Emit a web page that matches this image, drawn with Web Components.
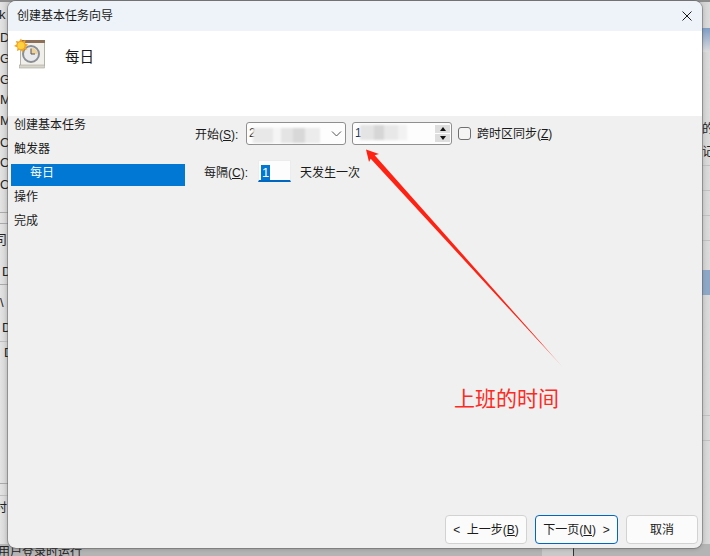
<!DOCTYPE html>
<html lang="zh">
<head>
<meta charset="utf-8">
<title>创建基本任务向导</title>
<style>
  html, body { margin: 0; padding: 0; }
  body {
    width: 710px;
    height: 556px;
    overflow: hidden;
    font: 12px/16px "Liberation Sans", "Noto Sans CJK SC", sans-serif;
    color: #1a1a1a;
  }
</style>
</head>
<body>
<task-desktop>
  <wizard-window heading="创建基本任务向导">
    <wizard-header slot="header">每日</wizard-header>

    <wizard-step slot="steps">创建基本任务</wizard-step>
    <wizard-step slot="steps">触发器</wizard-step>
    <wizard-step slot="steps" selected>每日</wizard-step>
    <wizard-step slot="steps">操作</wizard-step>
    <wizard-step slot="steps">完成</wizard-step>

    <daily-form slot="form"></daily-form>

    <wizard-button slot="footer" style="width:82px">&lt;&nbsp; 上一步(<u>B</u>)</wizard-button>
    <wizard-button slot="footer" style="width:83px" primary>下一页(<u>N</u>) &nbsp;&gt;</wizard-button>
    <wizard-button slot="footer" style="width:72px">取消</wizard-button>
  </wizard-window>
  <red-annotation>上班的时间</red-annotation>
</task-desktop>

<script>
function defineElement(name, html) {
  const template = document.createElement('template');
  template.innerHTML = html;
  customElements.define(name, class extends HTMLElement {
    constructor() {
      super();
      this.attachShadow({ mode: 'open' });
      this.shadowRoot.appendChild(template.content.cloneNode(true));
    }
  });
}

/* desktop behind the dialog: only thin strips of it stay visible */
defineElement('task-desktop', `
  <style>
    :host { display: block; position: relative; width: 710px; height: 556px; overflow: hidden; background: #d6d6d6; }
    .left { position: absolute; left: 0; top: 0; width: 12px; height: 556px; background: linear-gradient(90deg, #e4e4e4, #c4c4c4); }
    .right { position: absolute; right: 0; top: 0; width: 12px; height: 556px; background: linear-gradient(90deg, #c8c8c8, #dcdcdc); }
    .bottom { position: absolute; left: 0; bottom: 0; width: 710px; height: 12px; background: #b4b4b4; }
    .top { position: absolute; left: 0; top: 0; width: 710px; height: 2px; background: #8c8c8c; }
    .t { position: absolute; font-size: 13px; line-height: 16px; white-space: nowrap; color: #222; }
    .l { position: absolute; height: 1px; background: #a8a8a8; }
    .blue { position: absolute; right: 0; width: 8px; background: #8fa7c6; }
    .pale { position: absolute; bottom: 0; height: 8px; background: #c9c9c9; }
  </style>
  <div class="left"></div>
  <div class="right"></div>
  <div class="bottom"></div>
  <div class="top"></div>

  <div class="blue" style="top:28px;height:24px;background:linear-gradient(#7f9dc4,#dcdcdc)"></div>
  <div class="blue" style="top:270px;height:25px"></div>
  <div class="pale" style="left:542px;width:31px"></div>
  <div class="l" style="left:573px;bottom:0;width:1px;height:8px;background:#333"></div>

  <span class="t" style="left:-1px;top:7px">k</span>
  <span class="t" style="left:0;top:30px">De</span>
  <span class="t" style="left:0;top:51px">Go</span>
  <span class="t" style="left:0;top:72px">Go</span>
  <span class="t" style="left:0;top:92px">Mi</span>
  <span class="t" style="left:0;top:113px">Mi</span>
  <span class="t" style="left:0;top:135px">Or</span>
  <span class="t" style="left:0;top:155px">Or</span>
  <span class="t" style="left:0;top:177px">Or</span>
  <span class="t" style="left:-6px;top:232px">司</span>
  <span class="t" style="left:2px;top:264px">D</span>
  <span class="t" style="left:0;top:295px">\\</span>
  <span class="t" style="left:2px;top:320px">D</span>
  <span class="t" style="left:4px;top:345px">D</span>
  <span class="t" style="left:-5px;top:500px;font-size:12px">时</span>
  <span class="t" style="left:-2px;top:544px;font-size:12px">用户登录时运行</span>
  <span class="t" style="left:702px;top:121px;font-size:12px">的</span>
  <span class="t" style="left:702px;top:144px;font-size:12px">记</span>

  <div class="l" style="left:0;top:212px;width:8px"></div>
  <div class="l" style="left:0;top:223px;width:8px"></div>
  <div class="l" style="left:0;top:284px;width:8px"></div>
  <div class="l" style="left:0;top:341px;width:8px;background:#bdbdbd"></div>
  <div class="l" style="left:0;top:483px;width:8px"></div>
  <div class="l" style="left:0;top:495px;width:8px;background:#bdbdbd"></div>
  <div class="l" style="right:0;top:165px;width:8px;background:#c0c0c0"></div>
  <div class="l" style="right:0;top:190px;width:8px;background:#c0c0c0"></div>
  <div class="l" style="right:0;top:215px;width:8px;background:#c0c0c0"></div>
  <div class="l" style="right:0;top:240px;width:8px;background:#c0c0c0"></div>
  <div class="l" style="right:0;top:415px;width:8px;background:#c0c0c0"></div>
  <div class="l" style="right:0;top:440px;width:8px;background:#c0c0c0"></div>
  <slot></slot>
`);

defineElement('wizard-window', `
  <style>
    :host {
      display: flex;
      flex-direction: column;
      position: absolute;
      left: 8px;
      top: 1px;
      width: 694px;
      height: 547px;
      border-radius: 8px;
      overflow: hidden;
      background: #f0f0f0;
      box-shadow: 0 0 0 1px rgba(90,90,90,.45), 0 1px 4px rgba(0,0,0,.2);
    }
    .title { display: flex; align-items: center; justify-content: space-between; height: 30px; padding: 0 10px 0 9px; background: #eef3f9; }
    .head { height: 85px; background: #fff; }
    .body { flex: 1; display: flex; }
    .steps { width: 174px; margin-left: 3px; }
    .form { flex: 1; padding: 6px 0 0 10px; }
    .footer { display: flex; justify-content: flex-end; gap: 8px; padding: 0 4px 4px 0; }
    svg { display: block; }
  </style>
  <div class="title">
    <span id="heading"></span>
    <svg width="10" height="10" viewBox="0 0 10 10"><path d="M.5.5l9 9M9.500.5l-9 9" stroke="#1a1a1a" fill="none"/></svg>
  </div>
  <div class="head"><slot name="header"></slot></div>
  <div class="body">
    <div class="steps"><slot name="steps"></slot></div>
    <div class="form"><slot name="form"></slot></div>
  </div>
  <div class="footer"><slot name="footer"></slot></div>
`);
customElements.whenDefined('wizard-window').then(() => {
  const win = document.querySelector('wizard-window');
  win.shadowRoot.getElementById('heading').textContent = win.getAttribute('heading');
});

defineElement('wizard-header', `
  <style>
    :host { display: flex; padding: 7px 0 0 6px; }
    .name { margin: 8px 0 0 19px; font-size: 14.500px; line-height: 22px; }
    svg { display: block; }
  </style>
  <svg width="32" height="34" viewBox="0 0 32 34">
    <rect x="6.500" y="4.500" width="24" height="23" fill="#f1efe9" stroke="#b5b2aa"/>
    <rect x="5.500" y="27" width="25" height="3" fill="#d8d5cc" stroke="#a8a59c" stroke-width=".6"/>
    <rect x="6" y="2" width="25" height="3" fill="#8e6f58"/>
    <circle cx="17" cy="16" r="8" fill="#e9eaec" stroke="#8a8f96" stroke-width="2"/>
    <path d="M17 16V9.500A6.500 6.500 0 0 1 23.500 16z" fill="#efd29a"/>
    <path d="M17 10.500V16h4" stroke="#555" fill="none"/>
    <g transform="translate(0 .5)">
      <path d="M7 0l1.500 3L11.500 1.500 11 5l3 1-2.500 2.500L13.500 11l-3.500-.3L8.500 14 6.500 11 3 12.500 3.500 9 0 7.500 3 5.500 1.800 2.500 5 3z" fill="#f5a31c"/>
      <circle cx="7" cy="7" r="3.500" fill="#fdd23e"/>
    </g>
  </svg>
  <span class="name"><slot></slot></span>
`);

defineElement('wizard-step', `
  <style>
    :host { display: block; box-sizing: border-box; height: 22px; margin-bottom: 2px; padding: 1px 0 0 3px; line-height: 16px; }
    :host([selected]) { padding-left: 19px; background: #0078d4; color: #fff; }
  </style>
  <slot></slot>
`);

defineElement('date-combo', `
  <style>
    :host { display: block; position: relative; box-sizing: border-box; width: 100px; height: 23px; padding-left: 2px; line-height: 21px; color: #333; background: #fdfdfd; border: 1px solid #8f8f8f; border-radius: 3px; }
    svg { position: absolute; right: 3px; top: 8px; }
    .smear { position: absolute; left: 6px; top: 5px; width: 67px; height: 15px; filter: blur(1px); background: linear-gradient(90deg, #e8e8e8 0 30%, #f5f5f5 30% 42%, #e4e4e4 42% 60%, #d8d8d8 60% 78%, #ececec 78% 100%); }
  </style>
  <slot></slot>
  <div class="smear"></div>
  <svg width="11" height="6" viewBox="0 0 11 6"><path d="M1 .5l4.500 4.500L10 .5" stroke="#555" fill="none"/></svg>
`);

defineElement('time-spin', `
  <style>
    :host { display: block; position: relative; box-sizing: border-box; width: 100px; height: 23px; padding-left: 2px; line-height: 21px; color: #10305a; background: #fdfdfd; border: 1px solid #8f8f8f; border-radius: 3px; }
    .smear { position: absolute; left: 7px; top: 2px; width: 47px; height: 15px; filter: blur(1px); background: linear-gradient(90deg, #e4e4e4 0 30%, #d6d6d6 30% 50%, #e8e8e8 50% 80%, #f2f2f2 80% 100%); }
    .spin { position: absolute; right: 1px; top: 2px; width: 15px; display: flex; flex-direction: column; gap: 1px; }
    .spin div { display: flex; align-items: center; justify-content: center; height: 8px; background: #dedede; }
    .up { width: 0; height: 0; border: 3px solid transparent; border-top: 0; border-bottom: 4px solid #111; }
    .down { width: 0; height: 0; border: 3px solid transparent; border-bottom: 0; border-top: 4px solid #111; }
  </style>
  <slot></slot>
  <div class="smear"></div>
  <div class="spin">
    <div><span class="up"></span></div>
    <div><span class="down"></span></div>
  </div>
`);

defineElement('check-box', `
  <style>
    :host { display: inline-flex; align-items: center; gap: 6px; }
    .box { box-sizing: border-box; width: 13px; height: 13px; background: #f4f4f4; border: 1px solid #707070; border-radius: 3px; }
    .text { padding-top: 1px; }
  </style>
  <span class="box"></span>
  <span class="text"><slot></slot></span>
`);

defineElement('number-field', `
  <style>
    :host { display: block; box-sizing: border-box; width: 33px; height: 22px; padding: 4px 0 0 2px; background: #fdfdfd; border: 1px solid #ececec; border-bottom: 2px solid #0067c0; }
    span { display: block; width: 9px; height: 15px; line-height: 15px; font-size: 13px; text-align: center; background: #0078d4; color: #fff; }
  </style>
  <span><slot></slot></span>
`);

defineElement('daily-form', `
  <style>
    :host { display: block; }
    .row { display: flex; align-items: center; gap: 6px; }
    .label-start { width: 45px; padding-top: 2px; white-space: nowrap; }
    .every { margin-top: 15px; padding-left: 9px; gap: 0; }
    .label-every { width: 54px; padding-top: 3px; white-space: nowrap; }
    .after { margin-left: 9px; padding-top: 3px; }
    u { text-underline-offset: 1px; }
  </style>
  <div class="row">
    <span class="label-start">开始(<u>S</u>):</span>
    <date-combo>2</date-combo>
    <time-spin>1</time-spin>
    <check-box>跨时区同步(<u>Z</u>)</check-box>
  </div>
  <div class="row every">
    <span class="label-every">每隔(<u>C</u>):</span>
    <number-field>1</number-field>
    <span class="after">天发生一次</span>
  </div>
`);

defineElement('wizard-button', `
  <style>
    :host { display: flex; align-items: center; justify-content: center; box-sizing: border-box; height: 29px; background: #fbfbfb; border: 1px solid #d2d2d2; border-radius: 4px; white-space: nowrap; }
    :host([primary]) { border-color: #0067c0; }
  </style>
  <span><slot></slot></span>
`);

/* red arrow and caption pasted on top of the screenshot */
defineElement('red-annotation', `
  <style>
    :host { display: block; position: absolute; left: 0; top: 0; width: 710px; height: 556px; pointer-events: none; }
    svg { position: absolute; left: 0; top: 0; }
    .caption { position: absolute; left: 454px; top: 387px; font-size: 21px; line-height: 24px; color: #ff2a1f; white-space: nowrap; }
  </style>
  <svg width="710" height="556" viewBox="0 0 710 556">
    <defs>
      <linearGradient id="fade" gradientUnits="userSpaceOnUse" x1="366" y1="149.500" x2="563" y2="368">
        <stop offset="0" stop-color="#ff2213"/>
        <stop offset=".88" stop-color="#ff2213"/>
        <stop offset="1" stop-color="#ff2213" stop-opacity=".25"/>
      </linearGradient>
    </defs>
    <polygon points="366,149.500 379,154 374.700,155.200 563.500,368 370.700,158.800 369,162" fill="url(#fade)"/>
  </svg>
  <span class="caption"><slot></slot></span>
`);
</script>
</body>
</html>
